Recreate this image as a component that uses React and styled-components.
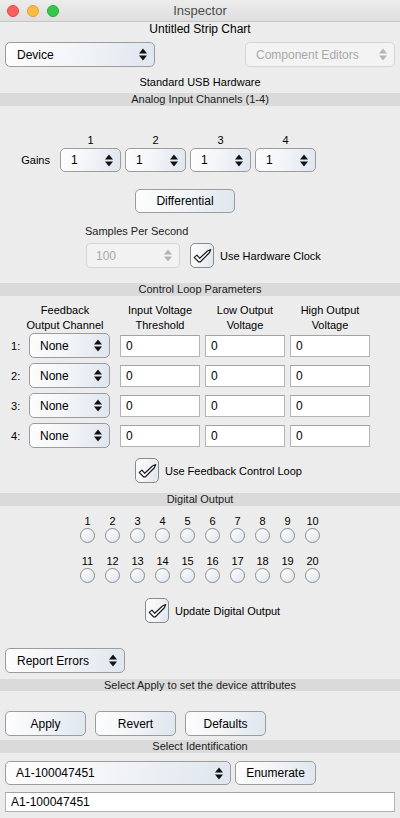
import React from 'react';
import styled, { createGlobalStyle } from 'styled-components';

const GlobalStyle = createGlobalStyle`
  html, body {
    margin: 0;
    padding: 0;
    background: #ececec;
  }
  body {
    font-family: "Liberation Sans", Arial, sans-serif;
    font-size: 11px;
    color: #000;
  }
`;

const controlFace = `
  background: linear-gradient(100deg, #fdfdfe 0%, #f3f5f8 45%, #dfe6ef 100%);
  border: 1px solid #9c9c9c;
  border-radius: 5px;
  box-sizing: border-box;
`;

function Arrows({ disabled }) {
  const fill = disabled ? '#b5b5b5' : '#111';
  return (
    <svg width="8" height="13" viewBox="0 0 8 13">
      <polygon points="0,5.5 4,0.5 8,5.5" fill={fill} />
      <polygon points="0,7.5 8,7.5 4,12.5" fill={fill} />
    </svg>
  );
}

function CheckGlyph() {
  return (
    <svg width="22" height="22" viewBox="0 0 24 24">
      <path
        d="M3.5 13.5 L6.5 11 L9.5 14.5 L18 6.5 L21.5 5 L20 8.5 L10 18.5 L8.5 18.5 Z"
        fill="#fff"
        stroke="#1c1c1c"
        strokeWidth="1.3"
        strokeLinejoin="round"
      />
    </svg>
  );
}

const Window = styled.div`
  width: 400px;
  height: 818px;
  overflow: hidden;
  background: #ececec;
  display: flex;
  flex-direction: column;
`;

const TitleBar = styled.div`
  height: 21px;
  border-bottom: 1px solid #c6c6c6;
  background: linear-gradient(#ececec, #dedede);
  display: grid;
  grid-template-columns: 1fr auto 1fr;
  align-items: center;
  font-size: 13px;
  color: #4b4b4b;
`;

const Lights = styled.div`
  display: flex;
  gap: 8px;
  padding-left: 7px;
`;

const Light = styled.span`
  width: 12px;
  height: 12px;
  border-radius: 50%;
  box-sizing: border-box;
  background: ${p => p.$color};
  border: 1px solid ${p => p.$edge};
`;

const Caption = styled.div`
  text-align: center;
  font-size: ${p => p.$size || 11}px;
  line-height: 14px;
  margin-top: ${p => p.$top || 0}px;
`;

const SectionBar = styled.div`
  margin-top: ${p => p.$top}px;
  height: ${p => p.$height || 13}px;
  line-height: ${p => p.$height || 13}px;
  background: #dadada;
  text-align: center;
  font-size: 11px;
  color: #1a1a1a;
`;

const Row = styled.div`
  display: flex;
  align-items: center;
  margin-top: ${p => p.$top || 0}px;
  padding-left: ${p => p.$left || 0}px;
  padding-right: ${p => p.$right || 0}px;
  gap: ${p => p.$gap || 0}px;
  justify-content: ${p => p.$justify || 'flex-start'};
`;

const PopupBox = styled.div`
  ${controlFace}
  width: ${p => p.$width}px;
  height: ${p => p.$height || 25}px;
  display: flex;
  align-items: center;
  justify-content: space-between;
  padding: 0 7px 0 ${p => p.$pad || 10}px;
  font-size: 12px;
  color: #000;
  ${p => p.$disabled && `
    background: #f3f3f3;
    border-color: #d3d3d3;
    color: #a8a8a8;
  `}
`;

function Popup({ value, width, height, pad, disabled }) {
  return (
    <PopupBox $width={width} $height={height} $pad={pad} $disabled={disabled}>
      <span>{value}</span>
      <Arrows disabled={disabled} />
    </PopupBox>
  );
}

const PushButton = styled.div`
  ${controlFace}
  width: ${p => p.$width}px;
  height: ${p => p.$height || 25}px;
  display: flex;
  align-items: center;
  justify-content: center;
  font-size: 12px;
  margin-left: ${p => p.$left || 0}px;
`;

const TextField = styled.div`
  box-sizing: border-box;
  width: ${p => p.$width}px;
  height: ${p => p.$height || 22}px;
  background: #fff;
  border: 1px solid #b4b4b4;
  border-top-color: #a2a2a2;
  display: flex;
  align-items: center;
  padding-left: 5px;
  font-size: 12px;
`;

const CheckBox = styled.div`
  ${controlFace}
  width: 24px;
  height: 25px;
  border-color: #8a8a8a;
  display: flex;
  align-items: center;
  justify-content: center;
`;

const CheckLabel = styled.span`
  font-size: 11px;
  margin-left: 6px;
`;

function Check({ label, left, top }) {
  return (
    <Row $left={left} $top={top}>
      <CheckBox>
        <CheckGlyph />
      </CheckBox>
      <CheckLabel>{label}</CheckLabel>
    </Row>
  );
}

const GainsGrid = styled.div`
  margin-top: 27px;
  display: grid;
  grid-template-columns: 56px repeat(4, 61px);
  grid-template-rows: 14px 24px;
  column-gap: 4px;
  row-gap: 1px;
  align-items: center;
`;

const ColLabel = styled.div`
  text-align: center;
  font-size: 11px;
  line-height: 14px;
`;

const GainsLabel = styled.div`
  text-align: right;
  padding-right: 6px;
  font-size: 11px;
`;

const SamplesBlock = styled.div`
  margin-top: 11px;
  padding-left: 85px;
`;

const FieldLabel = styled.div`
  font-size: 11px;
  line-height: 14px;
  color: #222;
`;

const DisabledCombo = styled.div`
  box-sizing: border-box;
  width: 94px;
  height: 25px;
  margin-left: 1px;
  margin-right: 10px;
  border: 1px solid #d4d4d4;
  border-radius: 4px;
  background: #f2f2f2;
  display: flex;
  align-items: center;
  justify-content: space-between;
  padding: 0 7px 0 9px;
  font-size: 12px;
  color: #a8a8a8;
`;

const LoopGrid = styled.div`
  margin-top: 7px;
  display: grid;
  grid-template-columns: 29px 91px 85px 85px 80px;
  grid-auto-rows: 25px;
  row-gap: 5px;
  align-items: center;
`;

const LoopHeader = styled.div`
  grid-column: ${p => p.$span || 'auto'};
  align-self: start;
  width: ${p => (p.$span ? 'auto' : '80px')};
  padding-left: ${p => (p.$span ? 10 : 0)}px;
  text-align: center;
  font-size: 11px;
  line-height: 15px;
  height: 30px;
  margin-bottom: -5px;
`;

const RowLabel = styled.div`
  padding-left: 11px;
  font-size: 11px;
`;

const DigitalBank = styled.div`
  margin-top: ${p => p.$top}px;
  padding-left: 75px;
  display: grid;
  grid-template-columns: repeat(10, 25px);
  grid-template-rows: 14px 15px;
  justify-items: center;
  align-items: center;
`;

const BitLabel = styled.div`
  font-size: 11px;
  line-height: 14px;
`;

const Radio = styled.div`
  width: 15px;
  height: 15px;
  box-sizing: border-box;
  border-radius: 50%;
  border: 1px solid #8c8c8c;
  background: linear-gradient(135deg, #ffffff 0%, #dde4ee 100%);
`;

const rows = [1, 2, 3, 4];
const bits = Array.from({ length: 20 }, (_, i) => i + 1);

function Bank({ list, top }) {
  return (
    <DigitalBank $top={top}>
      {list.map(n => (
        <BitLabel key={'l' + n}>{n}</BitLabel>
      ))}
      {list.map(n => (
        <Radio key={'r' + n} />
      ))}
    </DigitalBank>
  );
}

export default function App() {
  return (
    <Window>
      <GlobalStyle />
      <TitleBar>
        <Lights>
          <Light $color="#fc605c" $edge="#de4a47" />
          <Light $color="#fdbc40" $edge="#dea034" />
          <Light $color="#34c84a" $edge="#27aa35" />
        </Lights>
        <span>Inspector</span>
        <span />
      </TitleBar>

      <Caption $size={12}>Untitled Strip Chart</Caption>
      <Row $top={6} $left={5} $right={5} $justify="space-between">
        <Popup value="Device" width={150} pad={11} />
        <Popup value="Component Editors" width={150} pad={10} disabled />
      </Row>
      <Caption $top={8}>Standard USB Hardware</Caption>

      <SectionBar $top={4}>Analog Input Channels (1-4)</SectionBar>
      <GainsGrid>
        <span />
        {rows.map(n => (
          <ColLabel key={n}>{n}</ColLabel>
        ))}
        <GainsLabel>Gains</GainsLabel>
        {rows.map(n => (
          <Popup key={n} value="1" width={61} height={24} />
        ))}
      </GainsGrid>
      <Row $top={17}>
        <PushButton $width={100} $height={24} $left={135}>Differential</PushButton>
      </Row>
      <SamplesBlock>
        <FieldLabel>Samples Per Second</FieldLabel>
        <Row $top={5}>
          <DisabledCombo>
            <span>100</span>
            <Arrows disabled />
          </DisabledCombo>
          <CheckBox>
            <CheckGlyph />
          </CheckBox>
          <CheckLabel>Use Hardware Clock</CheckLabel>
        </Row>
      </SamplesBlock>

      <SectionBar $top={15}>Control Loop Parameters</SectionBar>
      <LoopGrid>
        <LoopHeader $span="1 / span 2">Feedback<br />Output Channel</LoopHeader>
        <LoopHeader>Input Voltage<br />Threshold</LoopHeader>
        <LoopHeader>Low Output<br />Voltage</LoopHeader>
        <LoopHeader>High Output<br />Voltage</LoopHeader>
        {rows.map(n => (
          <React.Fragment key={n}>
            <RowLabel>{n}:</RowLabel>
            <Popup value="None" width={81} />
            <TextField $width={80}>0</TextField>
            <TextField $width={80}>0</TextField>
            <TextField $width={80}>0</TextField>
          </React.Fragment>
        ))}
      </LoopGrid>
      <Check label="Use Feedback Control Loop" left={135} top={10} />

      <SectionBar $top={10}>Digital Output</SectionBar>
      <Bank list={bits.slice(0, 10)} top={8} />
      <Bank list={bits.slice(10)} top={11} />
      <Check label="Update Digital Output" left={145} top={15} />

      <Row $top={25} $left={5}>
        <Popup value="Report Errors" width={120} pad={11} />
      </Row>
      <SectionBar $top={6} $height={12}>Select Apply to set the device attributes</SectionBar>
      <Row $top={20} $left={5} $gap={9}>
        <PushButton $width={81}>Apply</PushButton>
        <PushButton $width={81}>Revert</PushButton>
        <PushButton $width={81}>Defaults</PushButton>
      </Row>

      <SectionBar $top={4}>Select Identification</SectionBar>
      <Row $top={8} $left={5} $gap={4}>
        <Popup value="A1-100047451" width={226} height={24} />
        <PushButton $width={81} $height={24}>Enumerate</PushButton>
      </Row>
      <Row $top={7} $left={5}>
        <TextField $width={390} $height={20}>A1-100047451</TextField>
      </Row>
    </Window>
  );
}
